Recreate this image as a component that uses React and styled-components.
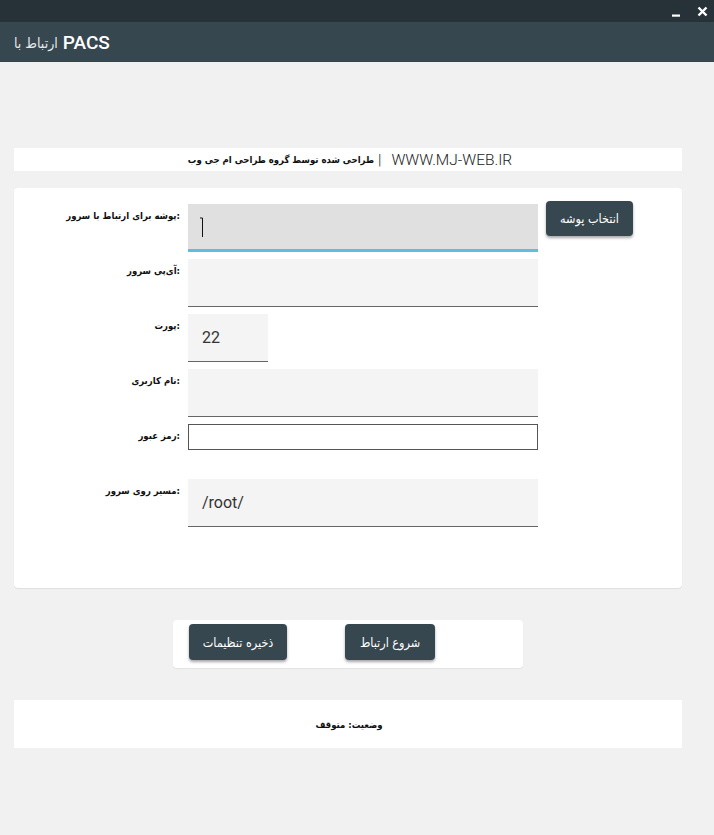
import React from "react";
import styled, { createGlobalStyle } from "styled-components";

const Global = createGlobalStyle`
  html, body { margin: 0; padding: 0; }
  body {
    background: #f1f1f1;
    font-family: Roboto, "DejaVu Sans", sans-serif;
    min-height: 100vh;
  }
  * { box-sizing: border-box; }
`;

const arabic = `"DejaVu Sans Condensed", "DejaVu Sans", sans-serif`;

const Window = styled.div`
  width: 714px;
  min-height: 835px;
  background: #f1f1f1;
  display: flex;
  flex-direction: column;
`;

const TitleBar = styled.div`
  height: 22px;
  background: #263238;
  display: flex;
  justify-content: flex-end;
  align-items: center;
  gap: 14px;
  padding-right: 6px;
`;

const WinButton = styled.span`
  display: flex;
  width: 12px;
  height: 12px;
  align-items: center;
  justify-content: center;
`;

const Header = styled.div`
  height: 40px;
  background: #37474f;
  display: flex;
  align-items: center;
  padding-left: 14px;
  color: #fff;
  direction: ltr;
  gap: 5px;
`;

const HeaderSmall = styled.span`
  font-family: ${arabic};
  font-size: 14px;
  color: #e6eaec;
  padding-top: 2px;
`;

const HeaderBig = styled.span`
  font-family: Roboto, sans-serif;
  font-weight: 500;
  font-size: 19px;
`;

const Content = styled.div`
  padding: 86px 32px 0 14px;
  display: flex;
  flex-direction: column;
`;

const Banner = styled.div`
  height: 23px;
  background: #fff;
  display: flex;
  align-items: center;
  justify-content: center;
  direction: rtl;
  color: #222;
  padding-left: 4px;
`;

const BannerLatin = styled.span`
  font-family: Roboto, sans-serif;
  font-weight: 300;
  font-size: 15.5px;
  color: #222;
`;

const Divider = styled(BannerLatin)`
  margin: 0 10px 0 4px;
`;

const BannerArabic = styled.span`
  font-family: ${arabic};
  font-weight: bold;
  font-size: 9.5px;
  color: #111;
`;

const Card = styled.div`
  margin-top: 17px;
  height: 400px;
  background: #fff;
  border-radius: 4px;
  box-shadow: 0 1px 1px rgba(0, 0, 0, 0.08);
  padding-top: 16px;
  display: grid;
  grid-template-columns: 166px 350px 87px;
  grid-auto-rows: 55px;
  column-gap: 8px;
  align-content: start;
`;

const Label = styled.div`
  direction: ltr;
  text-align: right;
  font-family: ${arabic};
  font-weight: bold;
  font-size: 9.5px;
  line-height: 1;
  padding-top: 7px;
  color: #111;
  white-space: nowrap;
`;

const FieldCell = styled.div`
  position: relative;
`;

const Field = styled.div`
  width: ${(p) => p.$width || "350px"};
  height: ${(p) => (p.$outlined ? "26px" : "48px")};
  background: ${(p) =>
    p.$focused ? "#e0e0e0" : p.$outlined ? "#fff" : "#f4f4f4"};
  border: ${(p) => (p.$outlined ? "1px solid #555" : "none")};
  border-bottom: ${(p) =>
    p.$focused
      ? "3px solid #5dbfe0"
      : p.$outlined
      ? "1px solid #555"
      : "1px solid #666"};
  display: flex;
  align-items: center;
  padding-left: 14px;
  font-family: Roboto, sans-serif;
  font-size: 16px;
  color: #333;
`;

const Cursor = styled.svg`
  position: absolute;
  left: 11px;
  top: 13px;
`;

const DarkButton = styled.button`
  background: #37474f;
  color: #fff;
  border: none;
  border-radius: 4px;
  box-shadow: 0 2px 3px rgba(0, 0, 0, 0.35);
  font-family: ${arabic};
  font-size: ${(p) => p.$size || "12.5px"};
  width: ${(p) => p.$width};
  height: ${(p) => p.$height || "35px"};
  margin-top: ${(p) => p.$offset || "0"};
  direction: rtl;
  padding: 0;
  cursor: pointer;
`;

const Panel = styled.div`
  margin: 32px auto 0;
  width: 350px;
  height: 48px;
  background: #fff;
  border-radius: 4px;
  box-shadow: 0 1px 1px rgba(0, 0, 0, 0.06);
  display: flex;
  align-items: flex-start;
  padding: 4px 0 0 16px;
  gap: 58px;
`;

const Status = styled.div`
  margin-top: 32px;
  height: 48px;
  background: #fff;
  display: flex;
  align-items: center;
  justify-content: center;
  direction: rtl;
  font-family: ${arabic};
  font-weight: bold;
  font-size: 9.5px;
  color: #111;
  padding-left: 2px;
`;

const rows = [
  { label: "پوشه برای ارتباط با سرور:", focused: true },
  { label: "آی‌پی سرور:" },
  { label: "پورت:", value: "22", width: "80px" },
  { label: "نام کاربری:" },
  { label: "رمز عبور:", outlined: true },
  { label: "مسیر روی سرور:", value: "/root/" },
];

export default function App() {
  return (
    <Window>
      <Global />
      <TitleBar>
        <WinButton>
          <svg width="10" height="12" viewBox="0 0 10 12">
            <rect x="1" y="9.5" width="8" height="2.2" fill="#fff" />
          </svg>
        </WinButton>
        <WinButton>
          <svg width="11" height="11" viewBox="0 0 11 11">
            <path
              d="M1.5 1.5 L9.5 9.5 M9.5 1.5 L1.5 9.5"
              stroke="#fff"
              strokeWidth="2.4"
            />
          </svg>
        </WinButton>
      </TitleBar>
      <Header>
        <HeaderSmall>ارتباط با</HeaderSmall>
        <HeaderBig>PACS</HeaderBig>
      </Header>
      <Content>
        <Banner>
          <BannerLatin>WWW.MJ-WEB.IR</BannerLatin>
          <Divider>|</Divider>
          <BannerArabic>طراحی شده توسط گروه طراحی ام جی وب</BannerArabic>
        </Banner>
        <Card>
          {rows.map((r, i) => (
            <React.Fragment key={i}>
              <Label>{r.label}</Label>
              <FieldCell>
                <Field
                  $focused={r.focused}
                  $outlined={r.outlined}
                  $width={r.width}
                >
                  {r.value}
                </Field>
                {r.focused && (
                  <Cursor width="7" height="21" viewBox="0 0 7 21">
                    <path
                      d="M1 1 H3.5 V20"
                      stroke="#111"
                      strokeWidth="1"
                      fill="none"
                    />
                  </Cursor>
                )}
              </FieldCell>
              {i === 0 ? (
                <DarkButton $width="87px" $offset="-3px">
                  انتخاب پوشه
                </DarkButton>
              ) : (
                <div />
              )}
            </React.Fragment>
          ))}
        </Card>
        <Panel>
          <DarkButton $width="98px" $height="36px" $size="12.5px">
            ذخیره تنظیمات
          </DarkButton>
          <DarkButton $width="90px" $height="36px" $size="12.5px">
            شروع ارتباط
          </DarkButton>
        </Panel>
        <Status>وضعیت: متوقف</Status>
      </Content>
    </Window>
  );
}
